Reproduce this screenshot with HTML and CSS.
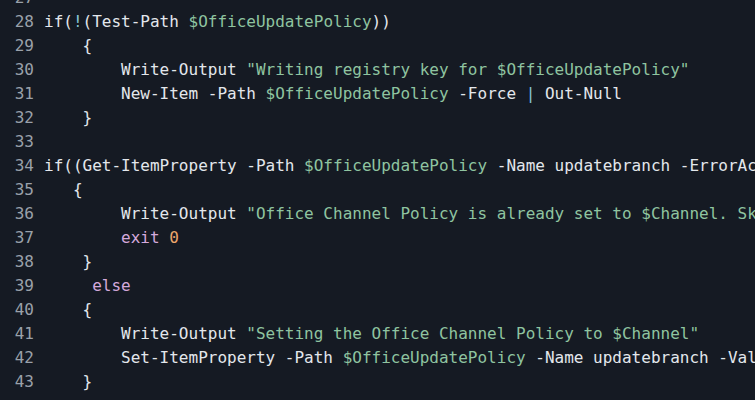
FILE: index.html
```html
<!DOCTYPE html>
<html lang="en">
<head>
<meta charset="utf-8">
<title>Code</title>
<link rel="stylesheet" href="styles.css">
</head>
<body>
<div class="code">
<div class="ln">27</div><div class="lc"></div>
<div class="ln">28</div><div class="lc">if(<span class="op">!</span>(Test-Path <span class="v">$OfficeUpdatePolicy</span>))</div>
<div class="ln">29</div><div class="lc">    {</div>
<div class="ln">30</div><div class="lc">        Write-Output <span class="s">"Writing registry key for $OfficeUpdatePolicy"</span></div>
<div class="ln">31</div><div class="lc">        New-Item -Path <span class="v">$OfficeUpdatePolicy</span> -Force <span class="op">|</span> Out-Null</div>
<div class="ln">32</div><div class="lc">    }</div>
<div class="ln">33</div><div class="lc"></div>
<div class="ln">34</div><div class="lc">if((Get-ItemProperty -Path <span class="v">$OfficeUpdatePolicy</span> -Name updatebranch -ErrorAction SilentlyContinue).updatebranch -eq $Channel)</div>
<div class="ln">35</div><div class="lc">   {</div>
<div class="ln">36</div><div class="lc">        Write-Output <span class="s">"Office Channel Policy is already set to $Channel. Skipping."</span></div>
<div class="ln">37</div><div class="lc">        <span class="k">exit</span> <span class="n">0</span></div>
<div class="ln">38</div><div class="lc">    }</div>
<div class="ln">39</div><div class="lc">     <span class="k">else</span></div>
<div class="ln">40</div><div class="lc">    {</div>
<div class="ln">41</div><div class="lc">        Write-Output <span class="s">"Setting the Office Channel Policy to $Channel"</span></div>
<div class="ln">42</div><div class="lc">        Set-ItemProperty -Path <span class="v">$OfficeUpdatePolicy</span> -Name updatebranch -Value $Channel -Force</div>
<div class="ln">43</div><div class="lc">    }</div>
</div>
</body>
</html>
```

FILE: styles.css
```css
html, body {
  margin: 0;
  padding: 0;
  background: #151a23;
  overflow: hidden;
  width: 755px;
  height: 400px;
}
.code {
  margin-top: -14px;
  display: grid;
  grid-template-columns: 20px 1fr;
  column-gap: 10px;
  padding-left: 14px;
  font-family: "DejaVu Sans Mono", monospace;
  font-size: 16px;
  line-height: 24px;
  color: #e3e7ec;
}
.ln {
  text-align: right;
  color: #9aa1aa;
}
.lc {
  white-space: pre;
  overflow: hidden;
}
.v, .s { color: #8fc4a0; }
.op { color: #86c6d4; }
.k { color: #d4a9dc; }
.n { color: #eda66b; }
```
